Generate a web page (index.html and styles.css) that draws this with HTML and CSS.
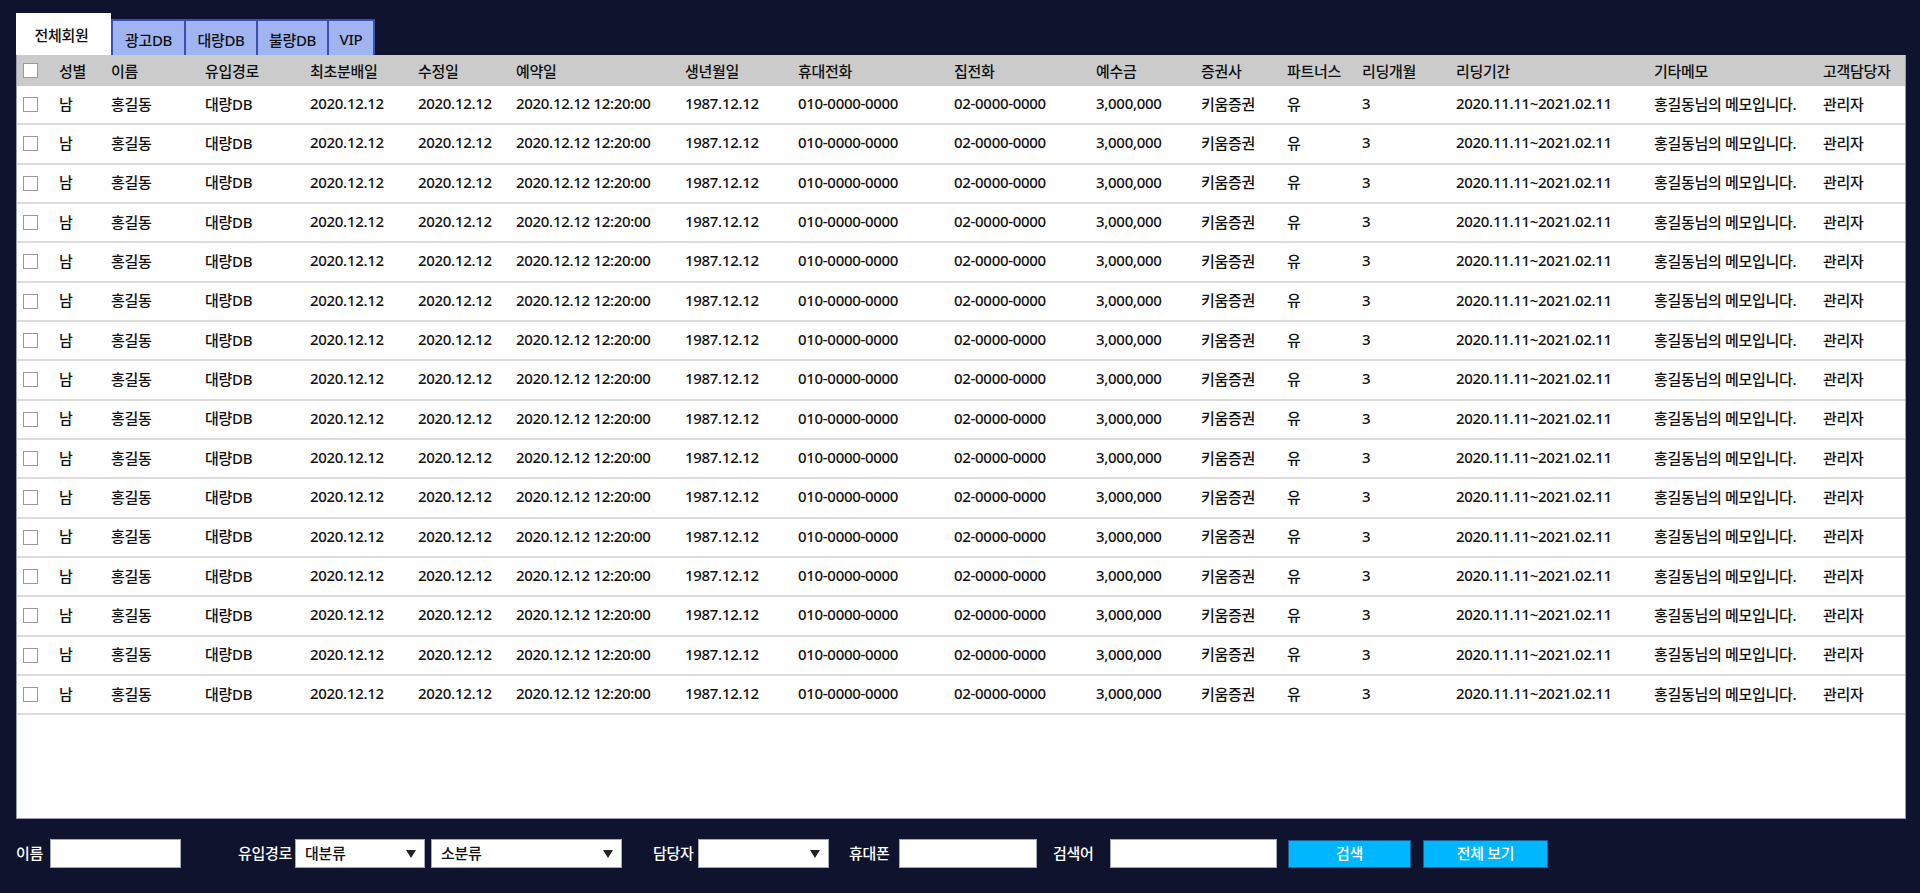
FILE: index.html
```html
<!DOCTYPE html>
<html lang="ko">
<head>
<meta charset="utf-8">
<title>전체회원</title>
<link rel="stylesheet" href="styles.css">
</head>
<body>
<div class="app">
  <nav class="tabs">
    <div class="tab tab-active">전체회원</div>
    <div class="tab tab-ad">광고DB</div>
    <div class="tab tab-bulk">대량DB</div>
    <div class="tab tab-bad">불량DB</div>
    <div class="tab tab-vip">VIP</div>
  </nav>
  <section class="panel">
    <div class="row head">
      <span class="cb"></span><span>성별</span><span>이름</span><span>유입경로</span><span>최초분배일</span><span>수정일</span><span>예약일</span><span>생년월일</span><span>휴대전화</span><span>집전화</span><span>예수금</span><span>증권사</span><span>파트너스</span><span>리딩개월</span><span>리딩기간</span><span>기타메모</span><span>고객담당자</span>
    </div>
    <div class="row"><span class="cb"></span><span>남</span><span>홍길동</span><span>대량DB</span><span>2020.12.12</span><span>2020.12.12</span><span>2020.12.12 12:20:00</span><span>1987.12.12</span><span>010-0000-0000</span><span>02-0000-0000</span><span>3,000,000</span><span>키움증권</span><span>유</span><span>3</span><span>2020.11.11~2021.02.11</span><span>홍길동님의 메모입니다.</span><span>관리자</span></div>
    <div class="row"><span class="cb"></span><span>남</span><span>홍길동</span><span>대량DB</span><span>2020.12.12</span><span>2020.12.12</span><span>2020.12.12 12:20:00</span><span>1987.12.12</span><span>010-0000-0000</span><span>02-0000-0000</span><span>3,000,000</span><span>키움증권</span><span>유</span><span>3</span><span>2020.11.11~2021.02.11</span><span>홍길동님의 메모입니다.</span><span>관리자</span></div>
    <div class="row"><span class="cb"></span><span>남</span><span>홍길동</span><span>대량DB</span><span>2020.12.12</span><span>2020.12.12</span><span>2020.12.12 12:20:00</span><span>1987.12.12</span><span>010-0000-0000</span><span>02-0000-0000</span><span>3,000,000</span><span>키움증권</span><span>유</span><span>3</span><span>2020.11.11~2021.02.11</span><span>홍길동님의 메모입니다.</span><span>관리자</span></div>
    <div class="row"><span class="cb"></span><span>남</span><span>홍길동</span><span>대량DB</span><span>2020.12.12</span><span>2020.12.12</span><span>2020.12.12 12:20:00</span><span>1987.12.12</span><span>010-0000-0000</span><span>02-0000-0000</span><span>3,000,000</span><span>키움증권</span><span>유</span><span>3</span><span>2020.11.11~2021.02.11</span><span>홍길동님의 메모입니다.</span><span>관리자</span></div>
    <div class="row"><span class="cb"></span><span>남</span><span>홍길동</span><span>대량DB</span><span>2020.12.12</span><span>2020.12.12</span><span>2020.12.12 12:20:00</span><span>1987.12.12</span><span>010-0000-0000</span><span>02-0000-0000</span><span>3,000,000</span><span>키움증권</span><span>유</span><span>3</span><span>2020.11.11~2021.02.11</span><span>홍길동님의 메모입니다.</span><span>관리자</span></div>
    <div class="row"><span class="cb"></span><span>남</span><span>홍길동</span><span>대량DB</span><span>2020.12.12</span><span>2020.12.12</span><span>2020.12.12 12:20:00</span><span>1987.12.12</span><span>010-0000-0000</span><span>02-0000-0000</span><span>3,000,000</span><span>키움증권</span><span>유</span><span>3</span><span>2020.11.11~2021.02.11</span><span>홍길동님의 메모입니다.</span><span>관리자</span></div>
    <div class="row"><span class="cb"></span><span>남</span><span>홍길동</span><span>대량DB</span><span>2020.12.12</span><span>2020.12.12</span><span>2020.12.12 12:20:00</span><span>1987.12.12</span><span>010-0000-0000</span><span>02-0000-0000</span><span>3,000,000</span><span>키움증권</span><span>유</span><span>3</span><span>2020.11.11~2021.02.11</span><span>홍길동님의 메모입니다.</span><span>관리자</span></div>
    <div class="row"><span class="cb"></span><span>남</span><span>홍길동</span><span>대량DB</span><span>2020.12.12</span><span>2020.12.12</span><span>2020.12.12 12:20:00</span><span>1987.12.12</span><span>010-0000-0000</span><span>02-0000-0000</span><span>3,000,000</span><span>키움증권</span><span>유</span><span>3</span><span>2020.11.11~2021.02.11</span><span>홍길동님의 메모입니다.</span><span>관리자</span></div>
    <div class="row"><span class="cb"></span><span>남</span><span>홍길동</span><span>대량DB</span><span>2020.12.12</span><span>2020.12.12</span><span>2020.12.12 12:20:00</span><span>1987.12.12</span><span>010-0000-0000</span><span>02-0000-0000</span><span>3,000,000</span><span>키움증권</span><span>유</span><span>3</span><span>2020.11.11~2021.02.11</span><span>홍길동님의 메모입니다.</span><span>관리자</span></div>
    <div class="row"><span class="cb"></span><span>남</span><span>홍길동</span><span>대량DB</span><span>2020.12.12</span><span>2020.12.12</span><span>2020.12.12 12:20:00</span><span>1987.12.12</span><span>010-0000-0000</span><span>02-0000-0000</span><span>3,000,000</span><span>키움증권</span><span>유</span><span>3</span><span>2020.11.11~2021.02.11</span><span>홍길동님의 메모입니다.</span><span>관리자</span></div>
    <div class="row"><span class="cb"></span><span>남</span><span>홍길동</span><span>대량DB</span><span>2020.12.12</span><span>2020.12.12</span><span>2020.12.12 12:20:00</span><span>1987.12.12</span><span>010-0000-0000</span><span>02-0000-0000</span><span>3,000,000</span><span>키움증권</span><span>유</span><span>3</span><span>2020.11.11~2021.02.11</span><span>홍길동님의 메모입니다.</span><span>관리자</span></div>
    <div class="row"><span class="cb"></span><span>남</span><span>홍길동</span><span>대량DB</span><span>2020.12.12</span><span>2020.12.12</span><span>2020.12.12 12:20:00</span><span>1987.12.12</span><span>010-0000-0000</span><span>02-0000-0000</span><span>3,000,000</span><span>키움증권</span><span>유</span><span>3</span><span>2020.11.11~2021.02.11</span><span>홍길동님의 메모입니다.</span><span>관리자</span></div>
    <div class="row"><span class="cb"></span><span>남</span><span>홍길동</span><span>대량DB</span><span>2020.12.12</span><span>2020.12.12</span><span>2020.12.12 12:20:00</span><span>1987.12.12</span><span>010-0000-0000</span><span>02-0000-0000</span><span>3,000,000</span><span>키움증권</span><span>유</span><span>3</span><span>2020.11.11~2021.02.11</span><span>홍길동님의 메모입니다.</span><span>관리자</span></div>
    <div class="row"><span class="cb"></span><span>남</span><span>홍길동</span><span>대량DB</span><span>2020.12.12</span><span>2020.12.12</span><span>2020.12.12 12:20:00</span><span>1987.12.12</span><span>010-0000-0000</span><span>02-0000-0000</span><span>3,000,000</span><span>키움증권</span><span>유</span><span>3</span><span>2020.11.11~2021.02.11</span><span>홍길동님의 메모입니다.</span><span>관리자</span></div>
    <div class="row"><span class="cb"></span><span>남</span><span>홍길동</span><span>대량DB</span><span>2020.12.12</span><span>2020.12.12</span><span>2020.12.12 12:20:00</span><span>1987.12.12</span><span>010-0000-0000</span><span>02-0000-0000</span><span>3,000,000</span><span>키움증권</span><span>유</span><span>3</span><span>2020.11.11~2021.02.11</span><span>홍길동님의 메모입니다.</span><span>관리자</span></div>
    <div class="row"><span class="cb"></span><span>남</span><span>홍길동</span><span>대량DB</span><span>2020.12.12</span><span>2020.12.12</span><span>2020.12.12 12:20:00</span><span>1987.12.12</span><span>010-0000-0000</span><span>02-0000-0000</span><span>3,000,000</span><span>키움증권</span><span>유</span><span>3</span><span>2020.11.11~2021.02.11</span><span>홍길동님의 메모입니다.</span><span>관리자</span></div>
  </section>
  <form class="search">
    <label class="field f-name"><span class="lbl lbl-name">이름</span><span class="box w-name"></span></label>
    <div class="field f-route"><span class="lbl lbl-route">유입경로</span>
      <div class="box sel w-big"><span>대분류</span><svg class="arrow" width="10" height="8" viewBox="0 0 10 8"><path d="M0 0H10L5 8Z"/></svg></div>
      <div class="box sel w-small"><span>소분류</span><svg class="arrow" width="10" height="8" viewBox="0 0 10 8"><path d="M0 0H10L5 8Z"/></svg></div>
    </div>
    <div class="field f-mgr"><span class="lbl lbl-mgr">담당자</span>
      <div class="box sel w-mgr"><span></span><svg class="arrow" width="10" height="8" viewBox="0 0 10 8"><path d="M0 0H10L5 8Z"/></svg></div>
    </div>
    <label class="field f-phone"><span class="lbl lbl-phone">휴대폰</span><span class="box w-phone"></span></label>
    <label class="field f-kw"><span class="lbl lbl-kw">검색어</span><span class="box w-kw"></span></label>
    <button type="button" class="btn btn-search">검색</button>
    <button type="button" class="btn btn-all">전체 보기</button>
  </form>
</div>
</body>
</html>
```
FILE: styles.css
```css
html, body {
  margin: 0;
  padding: 0;
}
body {
  background: #0f132d;
  font-family: "Noto Sans", "Noto Sans CJK KR", sans-serif;
  font-size: 15px;
  font-weight: 500;
  letter-spacing: -0.3px;
  color: #111;
}
.app {
  padding: 13px 0 0 16px;
}
.tabs {
  display: flex;
  align-items: flex-end;
  height: 42px;
}
.tab {
  box-sizing: border-box;
  display: flex;
  align-items: center;
  justify-content: center;
  height: 36px;
  background: #a0b4f1;
  border-top: 2px solid #3c4db4;
  border-right: 2px solid #3c4db4;
  color: #111;
  padding-top: 2px;
}
.tab-active {
  width: 95px;
  height: 42px;
  background: #fff;
  border: 0;
  padding: 0 4px 0 0;
}
.tab-ad { width: 75px; border-left: 2px solid #3c4db4; }
.tab-bulk { width: 72px; }
.tab-bad { width: 71px; }
.tab-vip { width: 46px; }

.panel {
  box-sizing: border-box;
  width: 1890px;
  height: 764px;
  background: #fff;
  border: 1px solid #9a9dab;
  border-top: 0;
}
.row {
  box-sizing: border-box;
  display: grid;
  grid-template-columns: 36px 52px 94px 105px 108px 98px 169px 113px 156px 142px 105px 86px 75px 94px 198px 169px 1fr;
  align-items: center;
  padding-left: 6px;
  height: 39.33px;
  border-bottom: 2px solid #dcdcdc;
  white-space: nowrap;
}
.row > span {
  padding-bottom: 3px;
}
.row.head {
  height: 31px;
  background: #cbcbcb;
  border-bottom: 0;
}
.row.head > span { padding-bottom: 1px; }
.row > .cb {
  box-sizing: border-box;
  width: 15px;
  height: 15px;
  padding: 0;
  background: #fff;
  border: 1px solid #9a9a9a;
}
.row.head > .cb { padding: 0; }

.search {
  display: flex;
  align-items: center;
  height: 29px;
  margin: 20px 0 0;
  color: #fff;
}
.field {
  display: flex;
  align-items: center;
}
.lbl {
  color: #fff;
  white-space: nowrap;
  padding-bottom: 2px;
}
.lbl-name { width: 34px; }
.lbl-route { width: 57px; }
.lbl-mgr { width: 45px; }
.lbl-phone { width: 50px; }
.lbl-kw { width: 57px; }
.f-route { margin-left: 57px; }
.f-mgr { margin-left: 31px; }
.f-phone { margin-left: 20px; }
.f-kw { margin-left: 16px; }

.box {
  box-sizing: border-box;
  display: flex;
  align-items: center;
  height: 29px;
  background: #fff;
  border: 1px solid #a6a8b4;
  color: #111;
}
.sel {
  justify-content: space-between;
  padding: 0 8px 2px 9px;
}
.sel + .sel { margin-left: 6px; }
.arrow { fill: #222; margin-top: 2px; }
.w-name { width: 131px; }
.w-big { width: 130px; }
.w-small { width: 191px; }
.w-mgr { width: 131px; }
.w-phone { width: 138px; }
.w-kw { width: 167px; }

.btn {
  box-sizing: border-box;
  height: 28px;
  margin: 0;
  padding: 0 0 2px;
  background: #00b7ff;
  border: 1px solid #165d95;
  color: #fff;
  font: inherit;
  letter-spacing: inherit;
}
.btn-search { width: 123px; margin-left: 11px; }
.btn-all { width: 125px; margin-left: 12px; }
```
